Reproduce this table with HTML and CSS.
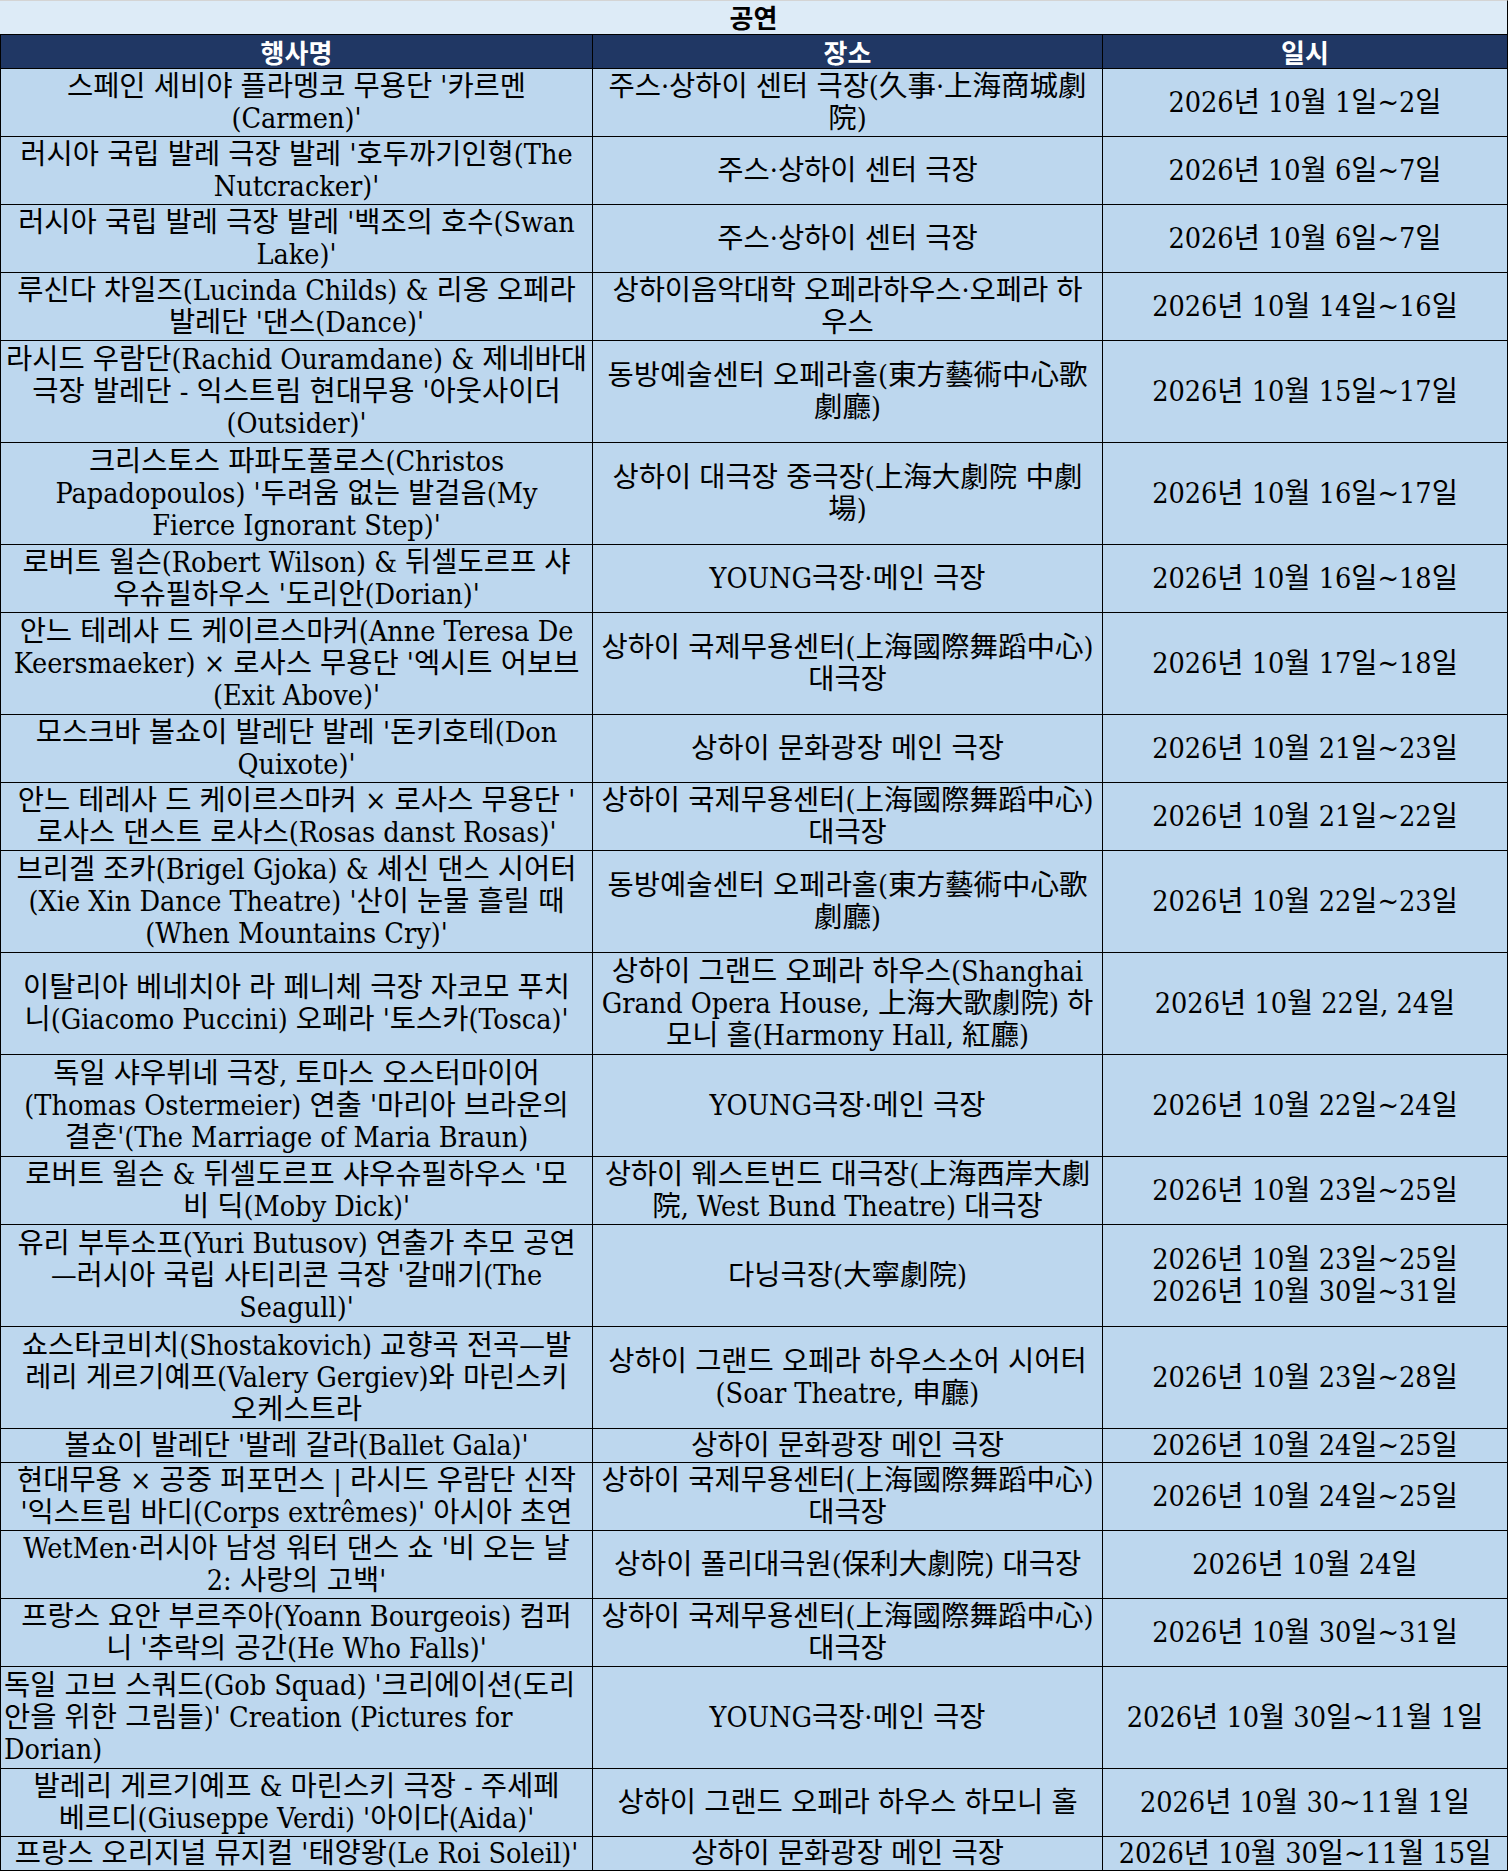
FILE: index.html
```html
<!DOCTYPE html>
<html lang="ko">
<head>
<meta charset="utf-8">
<title>공연</title>
<link rel="stylesheet" href="styles.css">
</head>
<body>
<div class="sheet">
  <div class="title">공연</div>
  <div class="row head">
    <div class="cell">행사명</div>
    <div class="cell">장소</div>
    <div class="cell">일시</div>
  </div>

  <div class="row r2">
    <div class="cell"><span>스페인 세비야 플라멩코 무용단 '카르멘</span><span>(Carmen)'</span></div>
    <div class="cell"><span>주스·상하이 센터 극장(久事·上海商城劇</span><span>院)</span></div>
    <div class="cell"><span>2026년 10월 1일~2일</span></div>
  </div>
  <div class="row r2">
    <div class="cell"><span>러시아 국립 발레 극장 발레 '호두까기인형(The</span><span>Nutcracker)'</span></div>
    <div class="cell"><span>주스·상하이 센터 극장</span></div>
    <div class="cell"><span>2026년 10월 6일~7일</span></div>
  </div>
  <div class="row r2">
    <div class="cell"><span>러시아 국립 발레 극장 발레 '백조의 호수(Swan</span><span>Lake)'</span></div>
    <div class="cell"><span>주스·상하이 센터 극장</span></div>
    <div class="cell"><span>2026년 10월 6일~7일</span></div>
  </div>
  <div class="row r2">
    <div class="cell"><span>루신다 차일즈(Lucinda Childs) &amp; 리옹 오페라</span><span>발레단 '댄스(Dance)'</span></div>
    <div class="cell"><span>상하이음악대학 오페라하우스·오페라 하</span><span>우스</span></div>
    <div class="cell"><span>2026년 10월 14일~16일</span></div>
  </div>
  <div class="row r3">
    <div class="cell"><span>라시드 우람단(Rachid Ouramdane) &amp; 제네바대</span><span>극장 발레단 - 익스트림 현대무용 '아웃사이더</span><span>(Outsider)'</span></div>
    <div class="cell"><span>동방예술센터 오페라홀(東方藝術中心歌</span><span>劇廳)</span></div>
    <div class="cell"><span>2026년 10월 15일~17일</span></div>
  </div>
  <div class="row r3">
    <div class="cell"><span>크리스토스 파파도풀로스(Christos</span><span>Papadopoulos) '두려움 없는 발걸음(My</span><span>Fierce Ignorant Step)'</span></div>
    <div class="cell"><span>상하이 대극장 중극장(上海大劇院 中劇</span><span>場)</span></div>
    <div class="cell"><span>2026년 10월 16일~17일</span></div>
  </div>
  <div class="row r2">
    <div class="cell"><span>로버트 윌슨(Robert Wilson) &amp; 뒤셀도르프 샤</span><span>우슈필하우스 '도리안(Dorian)'</span></div>
    <div class="cell"><span>YOUNG극장·메인 극장</span></div>
    <div class="cell"><span>2026년 10월 16일~18일</span></div>
  </div>
  <div class="row r3">
    <div class="cell"><span>안느 테레사 드 케이르스마커(Anne Teresa De</span><span>Keersmaeker) × 로사스 무용단 '엑시트 어보브</span><span>(Exit Above)'</span></div>
    <div class="cell"><span>상하이 국제무용센터(上海國際舞蹈中心)</span><span>대극장</span></div>
    <div class="cell"><span>2026년 10월 17일~18일</span></div>
  </div>
  <div class="row r2">
    <div class="cell"><span>모스크바 볼쇼이 발레단 발레 '돈키호테(Don</span><span>Quixote)'</span></div>
    <div class="cell"><span>상하이 문화광장 메인 극장</span></div>
    <div class="cell"><span>2026년 10월 21일~23일</span></div>
  </div>
  <div class="row r2">
    <div class="cell"><span>안느 테레사 드 케이르스마커 × 로사스 무용단 '</span><span>로사스 댄스트 로사스(Rosas danst Rosas)'</span></div>
    <div class="cell"><span>상하이 국제무용센터(上海國際舞蹈中心)</span><span>대극장</span></div>
    <div class="cell"><span>2026년 10월 21일~22일</span></div>
  </div>
  <div class="row r3">
    <div class="cell"><span>브리겔 조카(Brigel Gjoka) &amp; 셰신 댄스 시어터</span><span>(Xie Xin Dance Theatre) '산이 눈물 흘릴 때</span><span>(When Mountains Cry)'</span></div>
    <div class="cell"><span>동방예술센터 오페라홀(東方藝術中心歌</span><span>劇廳)</span></div>
    <div class="cell"><span>2026년 10월 22일~23일</span></div>
  </div>
  <div class="row r3">
    <div class="cell"><span>이탈리아 베네치아 라 페니체 극장 자코모 푸치</span><span>니(Giacomo Puccini) 오페라 '토스카(Tosca)'</span></div>
    <div class="cell"><span>상하이 그랜드 오페라 하우스(Shanghai</span><span>Grand Opera House, 上海大歌劇院) 하</span><span>모니 홀(Harmony Hall, 紅廳)</span></div>
    <div class="cell"><span>2026년 10월 22일, 24일</span></div>
  </div>
  <div class="row r3">
    <div class="cell"><span>독일 샤우뷔네 극장, 토마스 오스터마이어</span><span>(Thomas Ostermeier) 연출 '마리아 브라운의</span><span>결혼'(The Marriage of Maria Braun)</span></div>
    <div class="cell"><span>YOUNG극장·메인 극장</span></div>
    <div class="cell"><span>2026년 10월 22일~24일</span></div>
  </div>
  <div class="row r2">
    <div class="cell"><span>로버트 윌슨 &amp; 뒤셀도르프 샤우슈필하우스 '모</span><span>비 딕(Moby Dick)'</span></div>
    <div class="cell"><span>상하이 웨스트번드 대극장(上海西岸大劇</span><span>院, West Bund Theatre) 대극장</span></div>
    <div class="cell"><span>2026년 10월 23일~25일</span></div>
  </div>
  <div class="row r3">
    <div class="cell"><span>유리 부투소프(Yuri Butusov) 연출가 추모 공연</span><span>—러시아 국립 사티리콘 극장 '갈매기(The</span><span>Seagull)'</span></div>
    <div class="cell"><span>다닝극장(大寧劇院)</span></div>
    <div class="cell"><span>2026년 10월 23일~25일</span><span>2026년 10월 30일~31일</span></div>
  </div>
  <div class="row r3">
    <div class="cell"><span>쇼스타코비치(Shostakovich) 교향곡 전곡—발</span><span>레리 게르기예프(Valery Gergiev)와 마린스키</span><span>오케스트라</span></div>
    <div class="cell"><span>상하이 그랜드 오페라 하우스소어 시어터</span><span>(Soar Theatre, 申廳)</span></div>
    <div class="cell"><span>2026년 10월 23일~28일</span></div>
  </div>
  <div class="row r1">
    <div class="cell"><span>볼쇼이 발레단 '발레 갈라(Ballet Gala)'</span></div>
    <div class="cell"><span>상하이 문화광장 메인 극장</span></div>
    <div class="cell"><span>2026년 10월 24일~25일</span></div>
  </div>
  <div class="row r2">
    <div class="cell"><span>현대무용 × 공중 퍼포먼스 | 라시드 우람단 신작</span><span>'익스트림 바디(Corps extrêmes)' 아시아 초연</span></div>
    <div class="cell"><span>상하이 국제무용센터(上海國際舞蹈中心)</span><span>대극장</span></div>
    <div class="cell"><span>2026년 10월 24일~25일</span></div>
  </div>
  <div class="row r2">
    <div class="cell"><span>WetMen·러시아 남성 워터 댄스 쇼 '비 오는 날</span><span>2: 사랑의 고백'</span></div>
    <div class="cell"><span>상하이 폴리대극원(保利大劇院) 대극장</span></div>
    <div class="cell"><span>2026년 10월 24일</span></div>
  </div>
  <div class="row r2">
    <div class="cell"><span>프랑스 요안 부르주아(Yoann Bourgeois) 컴퍼</span><span>니 '추락의 공간(He Who Falls)'</span></div>
    <div class="cell"><span>상하이 국제무용센터(上海國際舞蹈中心)</span><span>대극장</span></div>
    <div class="cell"><span>2026년 10월 30일~31일</span></div>
  </div>
  <div class="row r3">
    <div class="cell left"><span>독일 고브 스쿼드(Gob Squad) '크리에이션(도리</span><span>안을 위한 그림들)' Creation (Pictures for</span><span>Dorian)</span></div>
    <div class="cell"><span>YOUNG극장·메인 극장</span></div>
    <div class="cell"><span>2026년 10월 30일~11월 1일</span></div>
  </div>
  <div class="row r2">
    <div class="cell"><span>발레리 게르기예프 &amp; 마린스키 극장 - 주세페</span><span>베르디(Giuseppe Verdi) '아이다(Aida)'</span></div>
    <div class="cell"><span>상하이 그랜드 오페라 하우스 하모니 홀</span></div>
    <div class="cell"><span>2026년 10월 30~11월 1일</span></div>
  </div>
  <div class="row r1">
    <div class="cell"><span>프랑스 오리지널 뮤지컬 '태양왕(Le Roi Soleil)'</span></div>
    <div class="cell"><span>상하이 문화광장 메인 극장</span></div>
    <div class="cell"><span>2026년 10월 30일~11월 15일</span></div>
  </div>
</div>
</body>
</html>
```
FILE: styles.css
```css
html, body {
  margin: 0;
  padding: 0;
  background: #ffffff;
}

.sheet {
  width: 1508px;
  font-family: "DejaVu Serif Condensed", "DejaVu Serif", "Noto Sans CJK KR", serif;
  font-stretch: condensed;
  font-size: 28.5px;
  font-weight: 400;
  color: #000000;
}

.title {
  box-sizing: border-box;
  height: 35px;
  border-top: 1px solid #d4d4d4;
  border-bottom: 1px solid #000000;
  border-right: 1px solid #000000;
  background: #ddebf7;
  font-family: "Noto Sans CJK KR", sans-serif;
  font-weight: 700;
  font-size: 26px;
  line-height: 32px;
  text-align: center;
}

.row {
  display: grid;
  grid-template-columns: 593px 510px 405px;
  box-sizing: border-box;
  height: 34px;
}

.row.r1 { height: 34px; }
.row.r2 { height: 68px; }
.row.r3 { height: 102px; }

.cell {
  box-sizing: border-box;
  display: flex;
  flex-direction: column;
  justify-content: center;
  align-items: center;
  text-align: center;
  background: #bdd7ee;
  border-right: 1px solid #000000;
  border-bottom: 1px solid #000000;
  line-height: 32px;
  white-space: nowrap;
}

.cell:first-child {
  border-left: 1px solid #000000;
}

.cell.left {
  align-items: flex-start;
  text-align: left;
  padding-left: 3px;
}

.cell span {
  display: block;
}

.head .cell {
  background: #203764;
  color: #ffffff;
  font-family: "Noto Sans CJK KR", sans-serif;
  font-weight: 700;
  font-size: 26px;
  line-height: 30px;
}
```
